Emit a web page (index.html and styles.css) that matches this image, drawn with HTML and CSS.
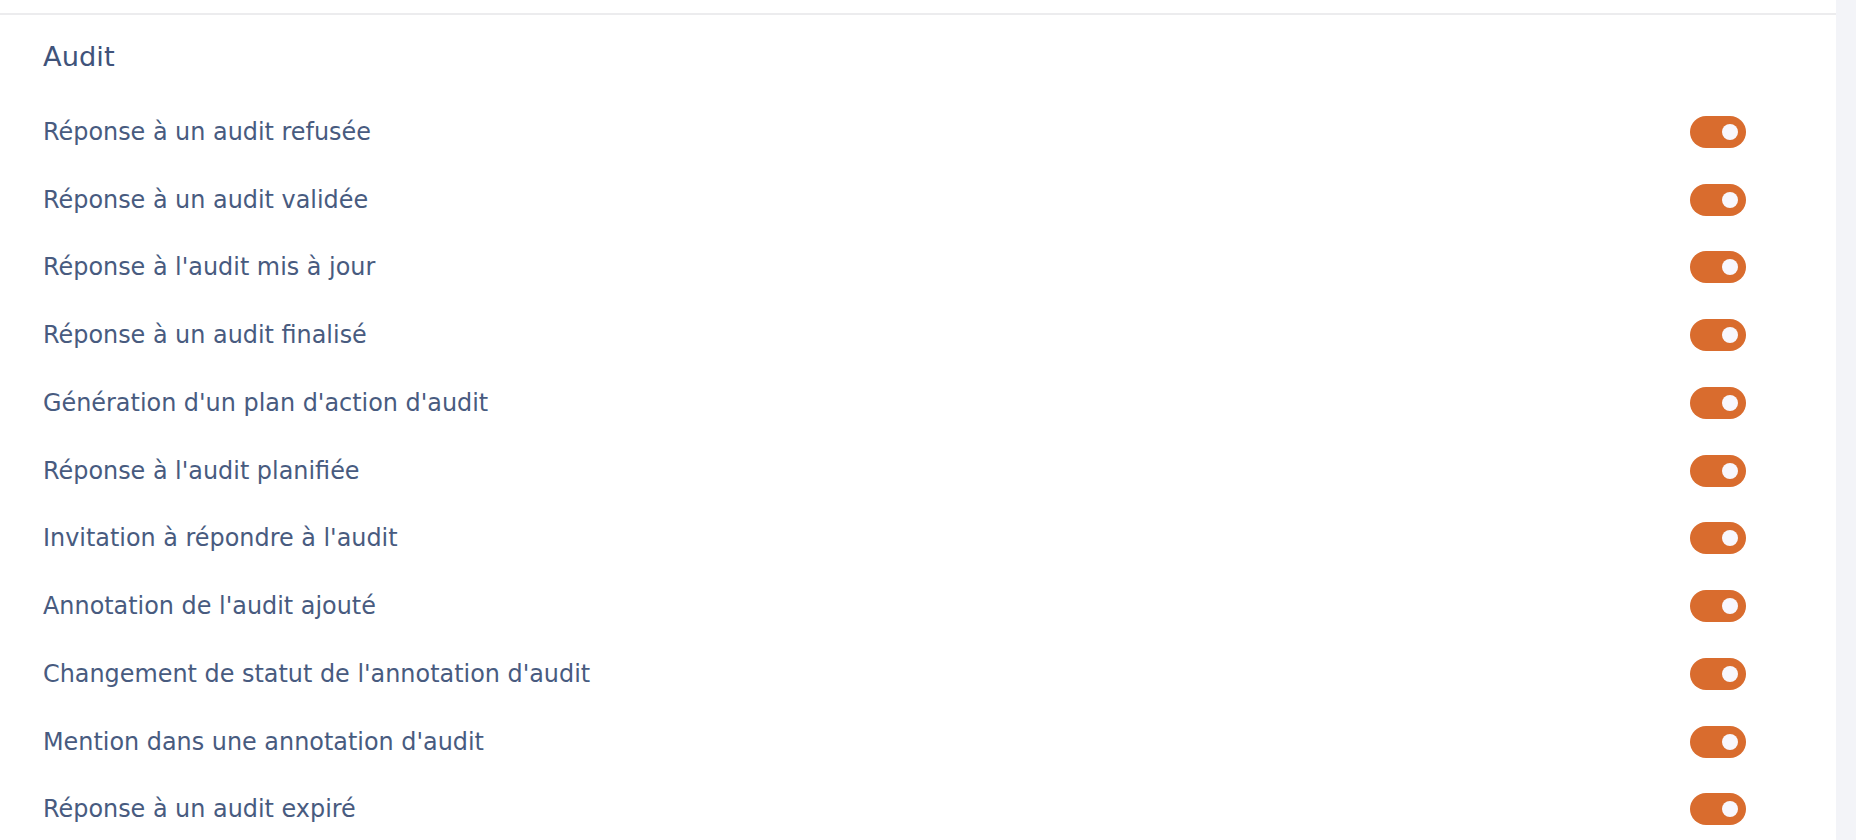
FILE: index.html
```html
<!DOCTYPE html>
<html>
<head>
    <meta charset="UTF-8">
    <title>Notifications - Audit</title>
    <link rel="stylesheet" href="styles.css">
</head>
<body>
    <div class="panel">
        <div class="panelTop"></div>
        <div class="section">
            <h2 class="sectionTitle">Audit</h2>
            <ul class="list">
                <li class="row"><span>Réponse à un audit refusée</span><span class="toggle on"><i></i></span></li>
                <li class="row"><span>Réponse à un audit validée</span><span class="toggle on"><i></i></span></li>
                <li class="row"><span>Réponse à l'audit mis à jour</span><span class="toggle on"><i></i></span></li>
                <li class="row"><span>Réponse à un audit finalisé</span><span class="toggle on"><i></i></span></li>
                <li class="row"><span>Génération d'un plan d'action d'audit</span><span class="toggle on"><i></i></span></li>
                <li class="row"><span>Réponse à l'audit planifiée</span><span class="toggle on"><i></i></span></li>
                <li class="row"><span>Invitation à répondre à l'audit</span><span class="toggle on"><i></i></span></li>
                <li class="row"><span>Annotation de l'audit ajouté</span><span class="toggle on"><i></i></span></li>
                <li class="row"><span>Changement de statut de l'annotation d'audit</span><span class="toggle on"><i></i></span></li>
                <li class="row"><span>Mention dans une annotation d'audit</span><span class="toggle on"><i></i></span></li>
                <li class="row"><span>Réponse à un audit expiré</span><span class="toggle on"><i></i></span></li>
            </ul>
        </div>
    </div>
</body>
</html>
```
FILE: styles.css
```css
*{padding:0;margin:0;box-sizing:border-box}
body{background:#f3f4f8;font-family:"DejaVu Sans","Noto Sans",sans-serif;color:#485b7f;overflow:hidden}
.panel{margin-right:20px;background:#fff;min-height:100vh}
.panelTop{height:15px;border-bottom:2px solid #ececee}
.section{padding:24px 90px 0 43px}
.sectionTitle{font-size:27.3px;font-weight:normal;line-height:36px;color:#40537a;margin-bottom:23px}
.list>li{list-style:none}
.row{display:flex;align-items:center;justify-content:space-between;height:67.75px;font-size:23.9px}
.toggle{display:flex;align-items:center;justify-content:flex-end;width:56px;height:32px;padding:0 8px;border-radius:16px;background:#d0d4de}
.toggle.on{background:#d96c2e}
.toggle i{display:block;width:16px;height:16px;border-radius:50%;background:#f8f7fd}
```
